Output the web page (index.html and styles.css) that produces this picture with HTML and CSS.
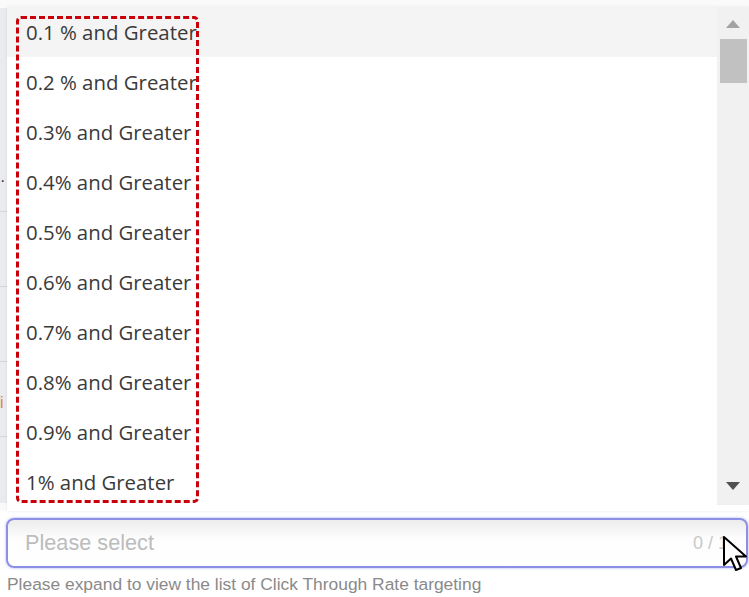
FILE: index.html
```html
<!DOCTYPE html>
<html>
<head>
<meta charset="utf-8">
<link rel="stylesheet" href="styles.css">
</head>
<body>
<div class="stage">
  <div class="backdrop">
    <div class="strip">
      <div class="srow"><span class="dots">·</span></div>
      <div class="srow"></div>
      <div class="srow"></div>
      <div class="srow"></div>
      <div class="srow"><span class="ich">i</span></div>
      <div class="srow"></div>
    </div>
  </div>
  <div class="dropdown">
    <ul class="options">
      <li class="opt active">0.1 % and Greater</li>
      <li class="opt">0.2 % and Greater</li>
      <li class="opt">0.3% and Greater</li>
      <li class="opt">0.4% and Greater</li>
      <li class="opt">0.5% and Greater</li>
      <li class="opt">0.6% and Greater</li>
      <li class="opt">0.7% and Greater</li>
      <li class="opt">0.8% and Greater</li>
      <li class="opt">0.9% and Greater</li>
      <li class="opt">1% and Greater</li>
    </ul>
    <div class="highlight"></div>
    <div class="scrollbar">
      <div class="arrow up"></div>
      <div class="thumb"></div>
      <div class="track"></div>
      <div class="arrow down"></div>
    </div>
  </div>
</div>
<div class="field">
  <div class="input">
    <span class="placeholder">Please select</span>
    <span class="count">0 / 1</span>
  </div>
  <svg class="cursor" width="28" height="38" viewBox="0 0 28 38">
    <path d="M2 2 L2 30 L9 23.5 L14 35 L19 33 L14 21.5 L24 21.5 Z" fill="#fff" stroke="#000" stroke-width="2" stroke-linejoin="round"/>
  </svg>
</div>
<p class="hint">Please expand to view the list of Click Through Rate targeting</p>
</body>
</html>
```
FILE: styles.css
```css
html, body {
  margin: 0;
  padding: 0;
  background: #ffffff;
  width: 749px;
  height: 597px;
  overflow: hidden;
}
.stage {
  position: relative;
  height: 511px;
  background: #fafafa;
}
.backdrop {
  padding-top: 8px;
  height: 503px;
  box-sizing: border-box;
}
.strip {
  width: 7px;
  height: 100%;
  background: #eaebef;
  display: flex;
  flex-direction: column;
  overflow: hidden;
}
.srow {
  border-bottom: 1px solid #d4d5da;
  height: 74px;
  flex: none;
  position: relative;
  font-family: "Liberation Sans", sans-serif;
  font-size: 16px;
  line-height: 16px;
}
.srow:first-child { height: 203px; }
.dots {
  position: absolute;
  left: 0;
  top: 165px;
  color: #334;
}
.ich {
  position: absolute;
  left: 0;
  top: -42px;
  color: #e08a1e;
}
.dropdown {
  position: absolute;
  left: 7px;
  top: 7px;
  width: 742px;
  height: 504px;
  background: #ffffff;
  box-shadow: 0 0 3px rgba(0,0,0,0.08);
}
.options {
  list-style: none;
  margin: 0;
  padding: 0;
  width: 710px;
  position: relative;
  z-index: 1;
}
.opt {
  height: 50px;
  line-height: 50px;
  padding-left: 19px;
  font-family: "Segoe UI", "Open Sans", sans-serif;
  font-size: 20.4px;
  color: #3a3a3a;
}
.opt.active { background: #f4f4f4; }
.highlight {
  position: absolute;
  left: 9px;
  top: 9px;
  width: 177px;
  height: 481px;
  border: 3px dashed #c8000a;
  border-radius: 5px;
  z-index: 2;
  pointer-events: none;
}
.scrollbar {
  position: absolute;
  right: 0;
  top: 0;
  width: 32px;
  height: 498px;
  background: #f1f1f1;
  display: flex;
  flex-direction: column;
  align-items: center;
  z-index: 3;
}
.arrow {
  width: 0;
  height: 0;
  border-left: 7px solid transparent;
  border-right: 7px solid transparent;
  flex: none;
}
.arrow.up {
  border-bottom: 8px solid #a3a3a3;
  margin-top: 13px;
}
.arrow.down {
  border-top: 8px solid #505050;
  margin-bottom: 15px;
}
.thumb {
  width: 27px;
  height: 44px;
  background: #c1c1c1;
  margin-top: 11px;
  flex: none;
}
.track { flex: 1; }
.field {
  position: relative;
  padding: 7px 1px 0 6px;
}
.input {
  height: 50px;
  box-sizing: border-box;
  border: 2px solid #8b90e4;
  border-radius: 8px;
  background: linear-gradient(#ececec, #fdfdfd 40%, #ffffff);
  box-shadow: 0 0 2px 1px rgba(140,150,240,0.35);
  display: flex;
  align-items: center;
  justify-content: space-between;
  padding: 0 18px 0 17px;
  font-family: "Liberation Sans", Arial, sans-serif;
}
.placeholder {
  font-size: 21.7px;
  color: #bcbcbc;
}
.count {
  font-size: 18px;
  color: #c8c8c8;
}
.cursor {
  position: absolute;
  left: 722px;
  top: 24px;
}
.hint {
  margin: 6px 0 0 7px;
  font-family: "Liberation Sans", Arial, sans-serif;
  font-size: 17.4px;
  color: #8a8a8a;
}
```
